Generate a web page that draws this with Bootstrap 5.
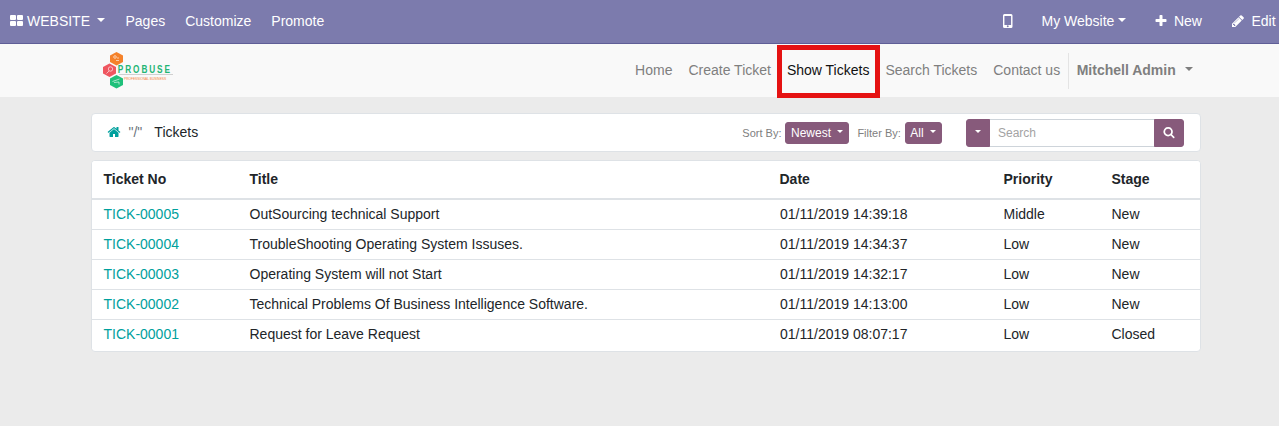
<!DOCTYPE html>
<html lang="en">
<head>
<meta charset="utf-8">
<title>Tickets</title>
<link href="https://cdn.jsdelivr.net/npm/bootstrap@5.3.0/dist/css/bootstrap.min.css" rel="stylesheet">
<style>
html{overflow:hidden}
body{font:14px/21px "Liberation Sans",Arial,sans-serif;background:#ebebeb;color:#212529;width:1292px;overflow:hidden}
svg{flex:none;display:block;overflow:visible}
.ico{width:14px;height:14px;fill:currentColor}
.topbar{height:44px;background:#7c7bad;border-bottom:1px solid #5f5e97;color:#fff;padding-left:10px;padding-bottom:1px}
.dropdown-toggle::after{vertical-align:.255em}
.site-nav{height:53px;background:#f9f9f9}
.page{width:1110px;margin-left:91px}
.menu{gap:16px;color:#7f7f7f}
.user{border-left:1px solid #e4e4e4;height:36px;padding:0 8px;margin-left:-8.5px;font-weight:bold;line-height:34px}
.user::after{margin-left:1.5px}
.current{position:relative;color:#111}
.current::before{content:"";position:absolute;left:-10px;top:-15px;width:103px;height:53px;border:5px solid #e51212}
.panel{background:#fff;border:1px solid #dee2e6;border-radius:4px}
.filters{height:39px;margin-top:16px;padding:0 16px 0 15px}
.teal{color:#00a09d}
.caption{font-size:11px;color:#808080;position:relative;top:.5px}
.btn-plum{--bs-btn-color:#fff;--bs-btn-bg:#875a7b;--bs-btn-border-color:#875a7b;font:12px/18px "Liberation Sans",Arial,sans-serif;padding:1px 5px;border-radius:3px;height:22px}
.filters>.btn-plum{padding-left:4.5px}
.finder{width:218px;height:28px;margin-left:24px}
.finder .btn{height:28px}
.finder .form-control{font-size:12px;padding:0 8px 0 9px;height:28px;min-height:0;border-color:#ced4da;border-left:0;border-right:0}
.finder .form-control::placeholder{color:#a3a3a3}
.tickets{margin-top:8px;height:192px;overflow:hidden}
.tickets .table{--bs-table-bg:#fff;table-layout:fixed;color:#212529;margin:0;border-color:#dee2e6}
.tickets th{padding:8px 11.5px;border-bottom:2px solid #dee2e6}
.tickets td{padding:4px 11.5px;border-bottom:1px solid #dee2e6}
.tickets td:nth-child(3){padding-left:12px}
.tickets tr:last-child td{border:0}
</style>
</head>
<body>
<header class="topbar d-flex align-items-center">
  <svg width="13" height="11" fill="#fff" style="margin-top:-2px"><rect width="6" height="5" rx="1"/><rect x="7" width="6" height="5" rx="1"/><rect y="6" width="6" height="5" rx="1"/><rect x="7" y="6" width="6" height="5" rx="1"/></svg>
  <span class="dropdown-toggle" style="margin-left:4px">WEBSITE </span>
  <span style="margin-left:20px">Pages</span><span style="margin-left:20px">Customize</span><span style="margin-left:20px">Promote</span>
  <div class="d-flex align-items-center ms-auto" style="width:289.500px">
    <svg width="9.500" height="14" viewBox="0 0 10 14" preserveAspectRatio="none"><path fill="#fff" fill-rule="evenodd" d="M1.500 0h7Q10 0 10 1.500v11Q10 14 8.500 14h-7Q0 14 0 12.500v-11Q0 0 1.500 0zM1.500 2v9h7V2zM4 12.300a1 1 0 1 0 2 0a1 1 0 1 0-2 0z"/></svg>
    <span class="dropdown-toggle" style="margin-left:29.500px">My Website</span>
    <svg class="ico" style="margin-left:28px" viewBox="0 0 1792 1792"><path d="M1600 736v192q0 40-28 68t-68 28h-416v416q0 40-28 68t-68 28h-192q-40 0-68-28t-28-68v-416h-416q-40 0-68-28t-28-68v-192q0-40 28-68t68-28h416v-416q0-40 28-68t68-28h192q40 0 68 28t28 68v416h416q40 0 68 28t28 68z"/></svg>
    <span style="margin-left:6px">New</span>
    <svg class="ico" style="margin-left:29px" viewBox="0 0 1792 1792"><path d="M491 1536l91-91-235-235-91 91v107h128v128h107zm523-928q0-22-22-22-10 0-17 7l-542 542q-7 7-7 17 0 22 22 22 10 0 17-7l542-542q7-7 7-17zm-54-192l416 416-832 832h-416v-416zm683 96q0 53-37 90l-166 166-416-416 166-165q36-38 90-38 53 0 91 38l235 234q37 39 37 91z"/></svg>
    <span style="margin-left:6.500px">Edit</span>
  </div>
</header>
<nav class="site-nav">
  <div class="page d-flex align-items-center h-100">
    <svg width="90" height="40" style="margin-left:11px" font-family="Liberation Sans,Arial,sans-serif">
      <path fill="#f5822b" d="M14.500 1l6.500 3.500v6.500l-6.500 3.500-6.500-3.500V4.500z"/>
      <path fill="#ef5660" d="M7.500 12.500l6.500 3.500v6.500l-6.500 3.500-6.500-3.500V16z"/>
      <path fill="#1fc07a" d="M14.500 24l6.500 3.500v6.500l-6.500 3.500-6.500-3.500v-6.500z"/>
      <g fill="none" stroke="#fff" stroke-opacity=".6"><circle cx="13" cy="6" r="1.300"/><path d="M14 9.500h3M16 6v2"/><circle cx="8.500" cy="18" r="2.200"/><path d="M7 20l-2.500 2.500M10.500 30.500l7-2.500M12 31.500l5-.500v2.500"/></g>
      <text transform="translate(15.800 21.700) scale(.8 1)" font-size="10.300" font-weight="bold" fill="#23b574" letter-spacing="2.400">PROBUSE</text>
      <path d="M17 23.500h54" stroke="#d0d0d0"/>
      <text transform="translate(22 29) scale(.75 1)" font-size="4.300" fill="#f5823b">PROFESSIONAL BUSINESS</text>
    </svg>
    <div class="menu d-flex align-items-center ms-auto">
      <span>Home</span><span>Create Ticket</span><span class="current">Show Tickets</span><span>Search Tickets</span><span>Contact us</span>
      <span class="user dropdown-toggle">Mitchell Admin&nbsp; </span>
    </div>
  </div>
</nav>
<main class="page">
  <div class="panel filters d-flex align-items-center">
    <svg class="ico teal" style="margin-top:-1px" viewBox="0 0 1792 1792"><path d="M1472 992v480q0 26-19 45t-45 19h-384v-384h-256v384h-384q-26 0-45-19t-19-45v-480q0-1 .5-3t.5-3l575-474 575 474q1 2 1 6zm223-69l-62 74q-8 9-21 11h-3q-13 0-21-7l-692-577-692 577q-12 8-24 7-13-2-21-11l-62-74q-8-10-7-23.500t11-21.500l719-599q32-26 76-26t76 26l244 204v-195q0-14 9-23t23-9h192q14 0 23 9t9 23v408l219 182q10 8 11 21.500t-7 23.500z"/></svg>
    <span style="margin-left:7.500px;color:#6c757d">"/"</span>
    <span style="margin-left:12px">Tickets</span>
    <span class="caption ms-auto">Sort By:</span>
    <button class="btn btn-plum dropdown-toggle" style="margin-left:4px">Newest </button>
    <span class="caption" style="margin-left:8px">Filter By:</span>
    <button class="btn btn-plum dropdown-toggle" style="margin-left:4px">All </button>
    <div class="finder input-group flex-nowrap">
      <button class="btn btn-plum dropdown-toggle" style="width:24px" aria-label="Search in"></button>
      <input class="form-control" placeholder="Search">
      <button class="btn btn-plum d-flex align-items-center justify-content-center" style="width:30px" aria-label="Search"><svg width="12" height="12" fill="#fff" viewBox="0 128 1792 1792"><path d="M1216 832q0-185-131.500-316.500t-316.500-131.500-316.500 131.500-131.500 316.500 131.500 316.500 316.500 131.500 316.500-131.500 131.500-316.500zm512 832q0 52-38 90t-90 38q-54 0-90-38l-343-342q-179 124-399 124-143 0-273.500-55.500t-225-150-150-225-55.500-273.500 55.500-273.500 150-225 225-150 273.500-55.500 273.500 55.500 225 150 150 225 55.500 273.500q0 220-124 399l343 343q37 37 37 90z"/></svg></button>
    </div>
  </div>
  <div class="panel tickets">
    <table class="table">
      <colgroup><col style="width:146px"><col style="width:530px"><col style="width:224px"><col style="width:108px"><col style="width:100px"></colgroup>
      <thead><tr><th>Ticket No</th><th>Title</th><th>Date</th><th>Priority</th><th>Stage</th></tr></thead>
      <tbody>
        <tr><td class="teal">TICK-00005</td><td>OutSourcing technical Support</td><td>01/11/2019 14:39:18</td><td>Middle</td><td>New</td></tr>
        <tr><td class="teal">TICK-00004</td><td>TroubleShooting Operating System Issuses.</td><td>01/11/2019 14:34:37</td><td>Low</td><td>New</td></tr>
        <tr><td class="teal">TICK-00003</td><td>Operating System will not Start</td><td>01/11/2019 14:32:17</td><td>Low</td><td>New</td></tr>
        <tr><td class="teal">TICK-00002</td><td>Technical Problems Of Business Intelligence Software.</td><td>01/11/2019 14:13:00</td><td>Low</td><td>New</td></tr>
        <tr><td class="teal">TICK-00001</td><td>Request for Leave Request</td><td>01/11/2019 08:07:17</td><td>Low</td><td>Closed</td></tr>
      </tbody>
    </table>
  </div>
</main>
<script src="https://cdn.jsdelivr.net/npm/bootstrap@5.3.0/dist/js/bootstrap.bundle.min.js"></script>
</body>
</html>
